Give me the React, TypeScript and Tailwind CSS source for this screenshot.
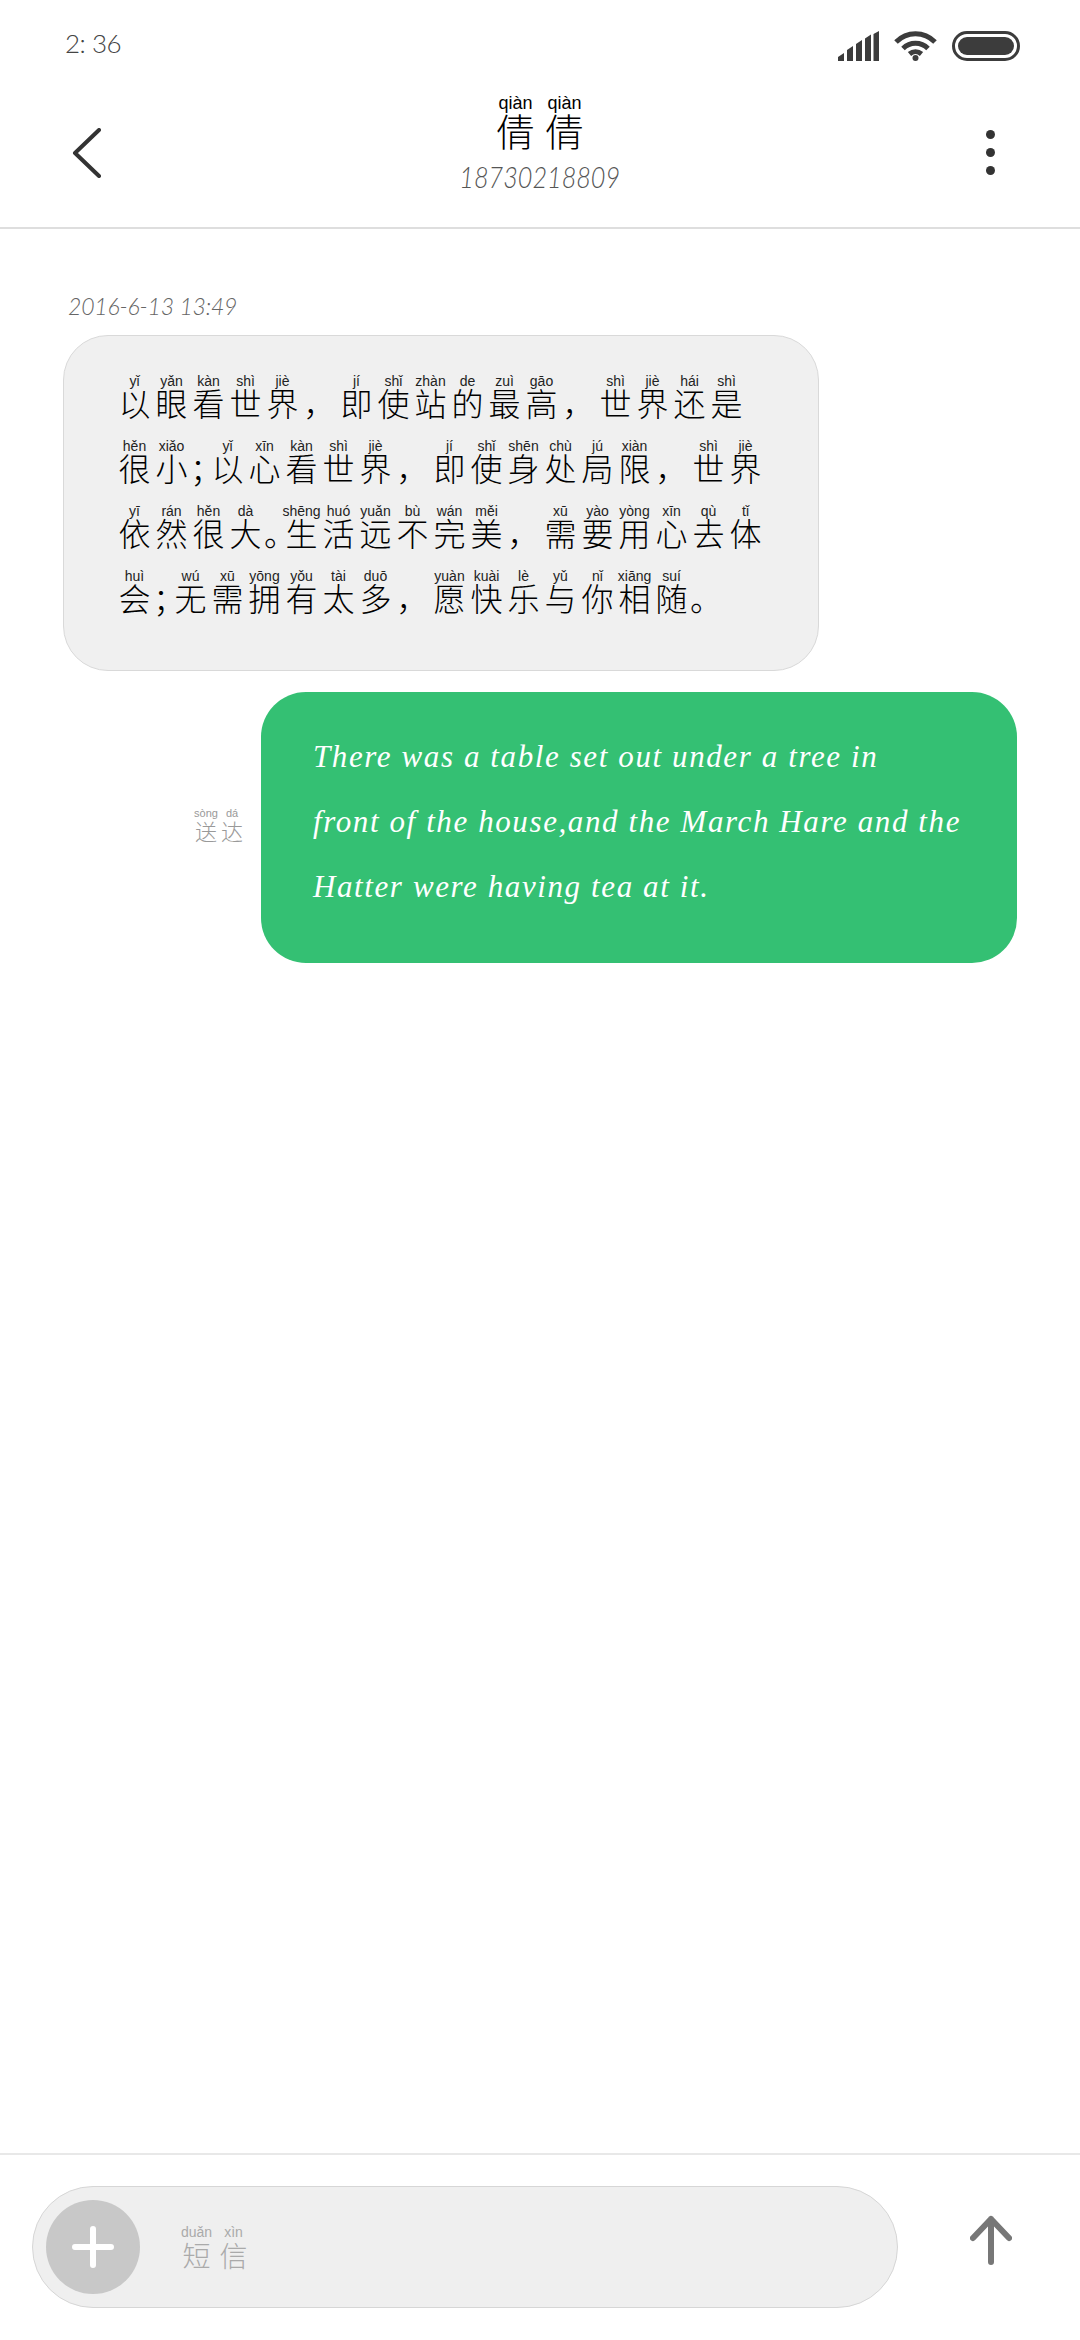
const hanFont = "font-['Noto_Sans_CJK_SC','Noto_Sans',sans-serif]"

type Cell = [string, string]

const rows: Cell[][] = [
  [["以", "yǐ"], ["眼", "yǎn"], ["看", "kàn"], ["世", "shì"], ["界", "jiè"], ["，", ""], ["即", "jí"], ["使", "shǐ"], ["站", "zhàn"], ["的", "de"], ["最", "zuì"], ["高", "gāo"], ["，", ""], ["世", "shì"], ["界", "jiè"], ["还", "hái"], ["是", "shì"]],
  [["很", "hěn"], ["小", "xiǎo"], ["；", ""], ["以", "yǐ"], ["心", "xīn"], ["看", "kàn"], ["世", "shì"], ["界", "jiè"], ["，", ""], ["即", "jí"], ["使", "shǐ"], ["身", "shēn"], ["处", "chù"], ["局", "jú"], ["限", "xiàn"], ["，", ""], ["世", "shì"], ["界", "jiè"]],
  [["依", "yī"], ["然", "rán"], ["很", "hěn"], ["大", "dà"], ["。", ""], ["生", "shēng"], ["活", "huó"], ["远", "yuǎn"], ["不", "bù"], ["完", "wán"], ["美", "měi"], ["，", ""], ["需", "xū"], ["要", "yào"], ["用", "yòng"], ["心", "xīn"], ["去", "qù"], ["体", "tǐ"]],
  [["会", "huì"], ["；", ""], ["无", "wú"], ["需", "xū"], ["拥", "yōng"], ["有", "yǒu"], ["太", "tài"], ["多", "duō"], ["，", ""], ["愿", "yuàn"], ["快", "kuài"], ["乐", "lè"], ["与", "yǔ"], ["你", "nǐ"], ["相", "xiāng"], ["随", "suí"], ["。", ""]],
]

function PinyinCell({ han, pinyin }: { han: string; pinyin: string }) {
  const narrow = han === "；" || han === "。"
  return (
    <div className={narrow ? "flex w-[19px] flex-col items-center" : "flex w-[37px] flex-col items-center"}>
      <span className="h-4 whitespace-nowrap font-['Liberation_Sans',sans-serif] text-[14px] leading-4 text-[#222]">
        {pinyin}
      </span>
      <span className={`-mt-1 h-[34px] font-['Noto_Sans_CJK_SC',sans-serif] text-[32px] leading-[34px] font-light text-black ${narrow ? "w-[19px] overflow-visible" : ""}`}>
        {han}
      </span>
    </div>
  )
}

function SmallRuby({ chars, pitch, size, sub, color }: { chars: Cell[]; pitch: string; size: string; sub: string; color: string }) {
  return (
    <div className={`flex ${color}`}>
      {chars.map(([han, py]) => (
        <div key={py} className={`flex flex-col items-center ${pitch}`}>
          <span className={`whitespace-nowrap font-['Liberation_Sans',sans-serif] ${sub}`}>{py}</span>
          <span className={`${hanFont} font-light ${size}`}>{han}</span>
        </div>
      ))}
    </div>
  )
}

function StatusIcons() {
  return (
    <div className="flex items-center gap-[15px] text-[#3c3c3c]">
      <svg width="41" height="30" viewBox="0 0 41 30" fill="currentColor">
        <path d="M0 30v-4l6-4v8zM9 30V19l6-4v15zM18 30V13l6-4v21zM27 30V7.500l6-4V30zM35.500 30V3l5.500-3v30z" />
      </svg>
      <svg width="43" height="30" viewBox="0 0 43 30" fill="none" stroke="currentColor" strokeWidth="5">
        <path d="M2 11 C13 0 30 0 41 11" />
        <path d="M9 17.500 C16 10.500 27 10.500 34 17.500" />
        <path d="M15.500 23 C19 20 24 20 27.500 23" />
        <circle cx="21.500" cy="27" r="3" fill="currentColor" stroke="none" />
      </svg>
      <div className="flex h-[30px] w-[68px] items-center justify-center rounded-full border-[3px] border-[#3c3c3c] p-[3px]">
        <div className="h-full w-full rounded-full bg-[#3c3c3c]" />
      </div>
    </div>
  )
}

export default function App() {
  return (
    <div className="flex h-[2340px] w-[1080px] flex-col bg-white">
      {/* Status bar */}
      <div className="flex h-[72px] shrink-0 items-start justify-between pt-[31px] pr-[60px] pl-[65px]">
        <span className="font-['Lato',sans-serif] text-[26px] leading-[24px] font-light tracking-[-0.5px] text-[#444]">2: 36</span>
        <StatusIcons />
      </div>

      {/* Header */}
      <header className="grid h-[157px] shrink-0 grid-cols-[1fr_auto_1fr] items-start border-b-2 border-[#dedede] px-[72px]">
        <svg className="mt-[56px]" width="30" height="50" viewBox="0 0 30 50" fill="none" stroke="#333" strokeWidth="4" strokeLinecap="round" strokeLinejoin="round">
          <path d="M27 2 3 25l24 23" />
        </svg>
        <div className="flex flex-col items-center pt-[22px]">
          <SmallRuby
            chars={[["倩", "qiàn"], ["倩", "qiàn "]]}
            pitch="w-[49px]"
            size="-mt-[3px] text-[38px] leading-[42px] text-black"
            sub="text-[18px] leading-[18px]"
            color="text-black"
          />
          <span className="mt-[10px] inline-block origin-center scale-x-[0.84] font-['Lato',sans-serif] text-[30px] leading-[30px] font-light whitespace-nowrap text-[#555] italic">
            18730218809
          </span>
        </div>
        <div className="mt-[58px] mr-[13px] flex flex-col gap-[9px] justify-self-end">
          <span className="h-[9px] w-[9px] rounded-full bg-[#333]" />
          <span className="h-[9px] w-[9px] rounded-full bg-[#333]" />
          <span className="h-[9px] w-[9px] rounded-full bg-[#333]" />
        </div>
      </header>

      {/* Messages */}
      <main className="flex flex-1 flex-col pt-[65px] pr-[63px] pl-[63px]">
        <span className="pl-[5px] font-['Lato',sans-serif] text-[23px] leading-[24px] font-light tracking-[-0.2px] text-[#666] italic">
          2016-6-13 13:49
        </span>
        <div className="mt-[17px] flex h-[336px] w-[756px] flex-col gap-[19px] rounded-[45px] border border-[#d9d9d9] bg-[#f0f0f0] pt-[37px] pl-[52px]">
          {rows.map((row, i) => (
            <div key={i} className="flex">
              {row.map(([han, py], j) => (
                <PinyinCell key={j} han={han} pinyin={py} />
              ))}
            </div>
          ))}
        </div>

        <div className="mt-[21px] flex items-center justify-end gap-[16px]">
          <div className="mb-[6px]">
            <SmallRuby
              chars={[["送", "sòng"], ["达", "dá"]]}
              pitch="w-[26px]"
              size="-mt-[1px] text-[22px] leading-[24px]"
              sub="text-[11px] leading-[12px]"
              color="text-[#999]"
            />
          </div>
          <div className="flex h-[271px] w-[756px] flex-col justify-center rounded-[45px] bg-[#34c073] pb-[12px] pl-[52px] font-['Liberation_Serif',serif] text-[31px] leading-[65px] tracking-[1.6px] text-white italic">
            <span>There was a table set out under a tree in</span>
            <span>front of the house,and the March Hare and the</span>
            <span>Hatter were having tea at it.</span>
          </div>
        </div>
      </main>

      {/* Composer */}
      <footer className="flex h-[187px] shrink-0 items-start border-t-2 border-[#e8e8e8] pt-[31px] pl-[32px]">
        <div className="flex h-[122px] w-[866px] items-center rounded-[61px] border border-[#d6d6d6] bg-[#efefef] pl-[13px]">
          <div className="flex h-[94px] w-[94px] items-center justify-center rounded-full bg-[#c8c8c8]">
            <svg width="42" height="42" viewBox="0 0 42 42" stroke="white" strokeWidth="6" strokeLinecap="round">
              <path d="M21 3v36M3 21h36" />
            </svg>
          </div>
          <div className="ml-[38px]">
            <SmallRuby
              chars={[["短", "duǎn"], ["信", "xìn"]]}
              pitch="w-[37px]"
              size="-mt-[1px] text-[28px] leading-[32px]"
              sub="text-[14px] leading-[16px]"
              color="text-[#aaa]"
            />
          </div>
        </div>
        <svg className="mt-[29px] ml-[72px]" width="42" height="50" viewBox="0 0 42 50" fill="none" stroke="#777" strokeWidth="6" strokeLinecap="round" strokeLinejoin="round">
          <path d="M21 47V4M3 23 21 4l18 19" />
        </svg>
      </footer>
    </div>
  )
}
